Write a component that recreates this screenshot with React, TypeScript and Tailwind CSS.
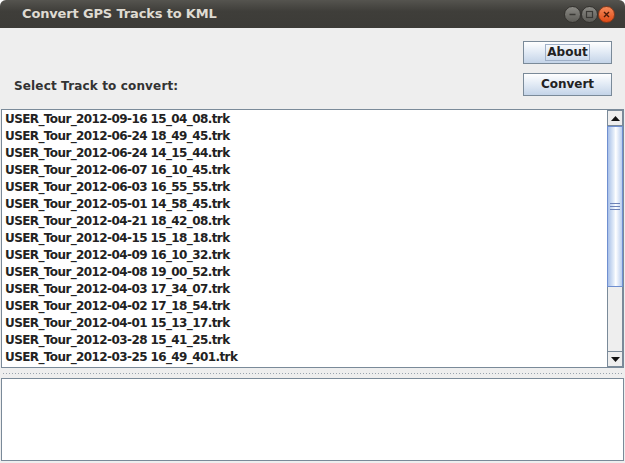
import React from 'react';

const tracks = [
    'USER_Tour_2012-09-16 15_04_08.trk',
    'USER_Tour_2012-06-24 18_49_45.trk',
    'USER_Tour_2012-06-24 14_15_44.trk',
    'USER_Tour_2012-06-07 16_10_45.trk',
    'USER_Tour_2012-06-03 16_55_55.trk',
    'USER_Tour_2012-05-01 14_58_45.trk',
    'USER_Tour_2012-04-21 18_42_08.trk',
    'USER_Tour_2012-04-15 15_18_18.trk',
    'USER_Tour_2012-04-09 16_10_32.trk',
    'USER_Tour_2012-04-08 19_00_52.trk',
    'USER_Tour_2012-04-03 17_34_07.trk',
    'USER_Tour_2012-04-02 17_18_54.trk',
    'USER_Tour_2012-04-01 15_13_17.trk',
    'USER_Tour_2012-03-28 15_41_25.trk',
    'USER_Tour_2012-03-25 16_49_401.trk',
];

function WindowButton({ kind }: { kind: 'min' | 'max' | 'close' }) {
    const close = kind === 'close';
    return (
        <div
            className={
                'w-[17px] h-[17px] rounded-full flex items-center justify-center border ' +
                (close
                    ? 'bg-[linear-gradient(180deg,#f58a5a,#df4a16)] border-[#8a3a1a]'
                    : 'bg-[linear-gradient(180deg,#8a8984,#5c5b56)] border-[#34332f]')
            }
        >
            <svg width="9" height="9" viewBox="0 0 9 9">
                {kind === 'min' && <path d="M1.5 4.5h6" stroke="#3a3935" strokeWidth="1.4" />}
                {kind === 'max' && <rect x="1.5" y="1.5" width="6" height="6" fill="none" stroke="#3a3935" strokeWidth="1.2" />}
                {close && <path d="M2 2l5 5M7 2l-5 5" stroke="#4a1a08" strokeWidth="1.4" />}
            </svg>
        </div>
    );
}

function SwingButton({ label, focused }: { label: string; focused?: boolean }) {
    return (
        <button className="w-[89px] h-[23px] border border-[#7a8a99] bg-[linear-gradient(180deg,#ffffff_0%,#e4ecf6_45%,#c4d4e8_100%)] flex items-center justify-center text-[12px] font-bold text-[#222]">
            <span className={focused ? 'border border-[#9fb0c8] px-[1px] leading-[15px]' : 'leading-[15px]'}>{label}</span>
        </button>
    );
}

function Arrow({ up }: { up?: boolean }) {
    return (
        <div className="h-[16px] w-full bg-[#eeeeee] border border-[#7a8a99] flex items-center justify-center">
            <svg width="9" height="5" viewBox="0 0 9 5">
                <path d={up ? 'M0 5L4.5 0L9 5Z' : 'M0 0L4.5 5L9 0Z'} fill="#111" />
            </svg>
        </div>
    );
}

export default function App() {
    return (
        <div
            className="w-[625px] h-[463px] bg-[#eeeeee] flex flex-col rounded-t-[6px] overflow-hidden"
            style={{ fontFamily: '"DejaVu Sans", sans-serif' }}
        >
            {/* Title bar */}
            <div className="h-[28px] shrink-0 bg-[linear-gradient(180deg,#55544f_0%,#3f3e3a_40%,#3c3b37_100%)] flex items-center pl-[22px] pr-[10px]">
                <span className="text-[#dfdbd2] text-[13px] font-bold tracking-[-0.15px] flex-1">Convert GPS Tracks to KML</span>
                <div className="flex items-center gap-0 mt-[1px]">
                    <WindowButton kind="min" />
                    <WindowButton kind="max" />
                    <WindowButton kind="close" />
                </div>
            </div>

            {/* Top panel */}
            <div className="h-[81px] shrink-0 flex items-end justify-between pl-[14px] pr-[13px] pb-[13px]">
                <span className="text-[12px] font-bold tracking-[0.15px] text-[#333] mb-[1px]">Select Track to convert:</span>
                <div className="flex flex-col gap-[9px]">
                    <SwingButton label="About" focused />
                    <SwingButton label="Convert" />
                </div>
            </div>

            {/* Track list */}
            <div className="h-[259px] shrink-0 mx-[1px] border border-[#7a8a99] bg-white flex">
                <div className="flex-1 overflow-hidden pt-[1px]">
                    {tracks.map((t) => (
                        <div key={t} className="h-[17px] leading-[17px] pl-[3px] text-[12px] font-bold tracking-[-0.6px] text-[#222] whitespace-nowrap">
                            {t}
                        </div>
                    ))}
                </div>
                <div className="w-[16px] flex flex-col">
                    <Arrow up />
                    <div className="h-[161px] border border-[#6f8fd0] bg-[linear-gradient(90deg,#a8c0e8_0%,#e8f0fa_45%,#ffffff_55%,#b8cdee_100%)] flex items-center justify-center">
                        <div className="flex flex-col gap-[2px]">
                            <div className="w-[10px] h-[1px] bg-[#6d82b8]" />
                            <div className="w-[10px] h-[1px] bg-[#6d82b8]" />
                            <div className="w-[10px] h-[1px] bg-[#6d82b8]" />
                        </div>
                    </div>
                    <div className="flex-1 bg-[#eeeeee] border-x border-[#7a8a99]" />
                    <Arrow />
                </div>
            </div>

            {/* Split divider */}
            <div className="h-[10px] shrink-0 flex items-center px-[3px]">
                <div className="w-full h-[1px] bg-[repeating-linear-gradient(90deg,#9aa4ae_0px,#9aa4ae_1px,transparent_1px,transparent_3px)]" />
            </div>

            {/* Output area */}
            <div className="flex-1 mx-[1px] mb-[2px] border border-[#7a8a99] bg-white" />
        </div>
    );
}
